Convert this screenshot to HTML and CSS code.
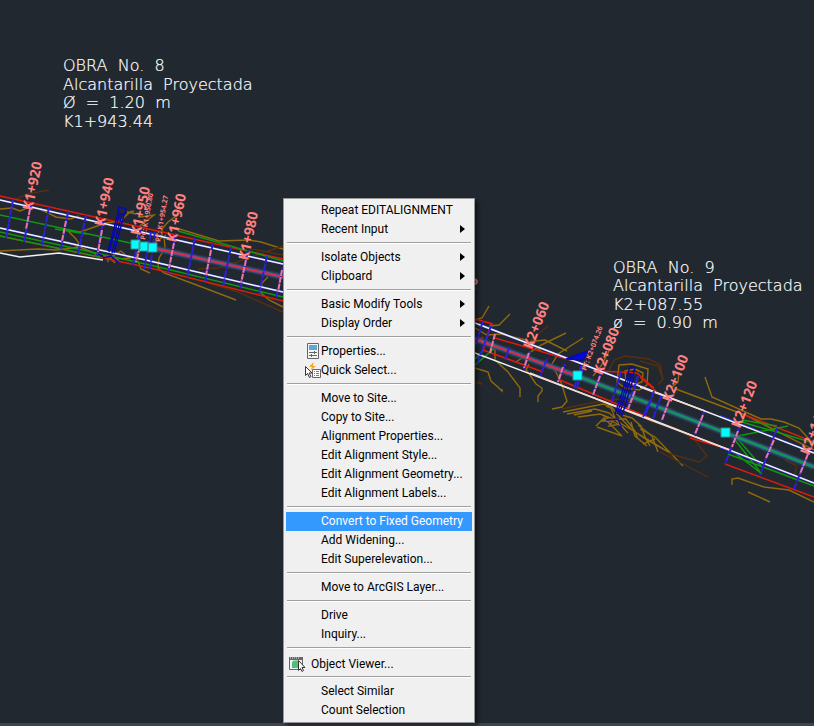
FILE: index.html
```html
<!DOCTYPE html>
<html lang="en">
<head>
<meta charset="utf-8">
<title>Alignment drawing</title>
<link rel="stylesheet" href="styles.css">
</head>
<body>
<main class="workspace">
<svg class="drawing" viewBox="0 0 814 726" preserveAspectRatio="xMinYMin slice" role="img" aria-label="Road alignment plan">
  <!-- contours -->
  <g class="contour">
    <path d="M0 209l12-1 8 3 7-3 6-1 11 4 12 6 14 2 9-3M66 230l14 2 26-9 14-2 10-9 4-1M68 231l8 8 3 5-2 2-10-4M0 251l18-1 20-1 19 1 23-3 16 7 15 3 10-6 9 8M130 212l6 2-9-2M138 261l3 8 9 4M121 259l13-2 6-8 10-3 16-11M176 228l43 13 30-1 12 2 22 7M164 237l1 11-6 10-1 10 6 5 30 11 42 16M140 217l14-2-14 11-3 12M268 277l-6 6-2 9 9 8 14 7M180 213l-12 9-6 7 0 7"/>
    <path d="M475 320l7-2 7-12M489 326l10-1 11-11M475 328l12 7 14-1 25 6 15 11M475 368l13 4 3 9 8 7 3 3 0-2M495 349l0 11 13 12 6 8 6 8 0 9M529 364l-3 6 4 5 6 9 6 4 0 3-4 5 0 6M553 367l5 9 4 9 3 10 2 6-5 6-10 2M566 333l-25 12-25 17M583 338l-25 16-9 15M524 342l21-2 22 11M619 365l13-1 16 5-1 16-8 5-14-2-8-6zM593 376l8-10 8-15"/>
    <path d="M625 371l10-2 8 4-1 9-9 3-7-4zM563 412l25-5 15-3 8 2 6 8 14 15 16 11 23 13M567 414l28-5 14 4 11 10 22 13 30 18M578 417l22-3 16 6 12 13M574 415l18-4M596 426l8-8 18 18-25-9M606 406l5 2 4 10M622 415l10 3 9 8 4 11 5 9M631 422l4 14 12 10M625 418l10 13 3 8M640 429l15 8 28 29M655 439l-12 5M705 377l7 20 49 22 10 0 13 3 15 6 9 10M676 389l69 26 69 35M732 485v-6l6-1 26 9 25 3 25 12M748 492l22 10"/>
    <path d="M603 415l5 4-7 2 12 0-4 5 12-2-4-5 9 0M608 419l15 8M638 425l14 11 6 16M679 372l-1 10-7 6"/>
    <path d="M103 255l5 3 0 4m2-4l5 5m-1-5l5 2"/>
  </g>
  <g class="contour contour-dark">
    <path d="M16 199l12-5 21-4M198 269l20-1 22-7 43-15M208 283l30 9 45 20M246 248l37 7M475 383l7 1-4-3M528 342l20-16M562 409l28-6 30-4 52 10M609 370l5-10 11-4 24 3 11 6 3 14-5 6M640 415l10 6 25 7 20 12 12 16-8 6-25-7-6-2M660 452l48 25M785 460l12 6-3 10M640 361l18 5 5 14"/>
  </g>
  <!-- side slopes -->
  <g class="red">
    <path d="M0 196L140 227 283 259M0 236l150 32 133 33"/>
    <path d="M475 319l18 5M483 337l-9 8M483 350l60 22M495 338l85 25M600 371l37 2 17 15M560 380l90 38M690 438l41 12M725 464l89 33M745 415l69 27M640 377l16 14M483 351l8-28"/>
  </g>
  <g class="green">
    <path d="M0 215L135 244M0 232l150 33 133 32M0 236l100 21M178 231l105 30M55 229l32 5M475 365l21-18M475 359l8-8M736 437l26 30M731 450l31 24M738 436l50-10M742 422l72 21M742 420l35 6M728 454l86 32M735 440l26 33"/>
  </g>
  <!-- alignment halo and centre line -->
  <path class="halo" d="M153 248L283 277M475 339L577 376 726 433 814 467"/>
  <path class="halo halo-core" d="M153 248L283 277M475 339L577 376 726 433 814 467"/>
  <path class="centre" d="M153 248L283 277M475 339L577 376"/>
  <path class="green-axis" d="M577 376L640 400 726 433 814 467"/>
  <!-- road edges -->
  <g class="edge-blue"><path d="M0 200L150 234 283 264M0 228l150 33 133 31M475 323l175 67M720 416l94 37M720 447l94 36"/></g>
  <g class="edge"><path d="M0 200L150 234 283 264M0 228l150 33 133 31M475 323l175 67 164 63M475 353l175 66 164 64M0 253l20 4 39-4 44 7"/></g>
  <g class="edge-warm"><path d="M640 387l65 24M640 416l90 34M530 373l110 43"/></g>
  <!-- section ticks -->
  <g class="tick">
    <path d="M13 200l-7 38M31 205l-7 37M49 207l-7 38M68 212l-7 37M86 215l-8 39M103 222l-6 33M141 227l-8 38M151 232l-7 37M155 231l-5 38M176 233l-8 40M195 238l-8 40M213 243l-8 39M231 247l-8 39M248 250l-8 40M267 256l-8 38M283 267l-7 31"/>
    <path d="M483 321l-8 25M491 326l-14 38M509 347l-4 13M530 351l-6 18M547 359l-7 17M565 364l-7 18M581 366l-7 23M584 366l-8 24M601 373l-8 22M621 372l-9 29M638 376l-10 31M649 403l-6 14M654 391l-9 25M661 396l-8 23M670 398l-9 24M704 412l-9 24M740 425l-15 39M777 428l-17 47M808 453l-14 36"/>
  </g>
  <g class="station">
    <path d="M30 209l-4 20M66 221l-4 20M102 230l-4 22M140 247l-4 15M174 243l-5 25M211 250l-5 25M246 260l-5 23M282 270l-4 22M495 334l-5 19M529 353l-5 15M563 367l-5 15M600 376l-7 19M635 391l-7 18M669 401l-7 19M703 415l-8 19M738 431l-6 16M774 440l-8 18M808 454l-8 20"/>
  </g>
  <!-- culverts -->
  <g class="culvert">
    <path d="M119 207l7 2-2 6-6-2zM120 213l-11 39M122 214l-10 39M124 215l-10 38M118 213l-10 38M103 258l8-2 8 7M103 256l-5-2M570 358l20-7M575 357l10-5M571 359l12-2"/>
    <path d="M630 367l5 1-2 7-5-2zM630 375l-13 39M632 375l-13 40M628 374l-13 40M634 376l-12 40M606 420l12-1 3 7 0 3"/>
    <path class="wedge" d="M566 359l22-8-5 9z"/>
  </g>
  <!-- station labels -->
  <g class="label">
    <text transform="translate(32 211) rotate(-78)">K1+920</text>
    <text transform="translate(104 227) rotate(-78)">K1+940</text>
    <text transform="translate(140 236) rotate(-78)">K1+950</text>
    <text transform="translate(176 243) rotate(-78)">K1+960</text>
    <text transform="translate(248 261) rotate(-78)">K1+980</text>
    <text transform="translate(461 325) rotate(-69)">K2+040</text>
    <text transform="translate(532 350) rotate(-69)">K2+060</text>
    <text transform="translate(602 376) rotate(-69)">K2+080</text>
    <text transform="translate(671 403) rotate(-69)">K2+100</text>
    <text transform="translate(740 429) rotate(-69)">K2+120</text>
    <text transform="translate(809 456) rotate(-69)">K2+140</text>
  </g>
  <g class="label label-small">
    <text transform="translate(145 240) rotate(-80)">PC: K1+950.80</text>
    <text transform="translate(160 242) rotate(-80)">PT: K1+954.27</text>
    <text transform="translate(586 371) rotate(-69)">PT: K2+074.26</text>
  </g>
  <g class="grip">
    <path d="M131 240h9v9h-9zM139 242h9v9h-9zM148 243h9v9h-9zM573 371h9v9h-9zM721 428h9v9h-9z"/>
  </g>
  <!-- structure notes -->
  <g class="note">
    <text x="63" y="71">OBRA  No.  8</text>
    <text x="63" y="90">Alcantarilla  Proyectada</text>
    <text x="63" y="108">Ø  =  1.20  m</text>
    <text x="63" y="127">K1+943.44</text>
    <text x="613" y="273">OBRA  No.  9</text>
    <text x="613" y="291">Alcantarilla  Proyectada</text>
    <text x="613" y="310">K2+087.55</text>
    <text x="613" y="328">ø  =  0.90  m</text>
  </g>
</svg>
<div class="menu" role="menu">
  <button class="item" role="menuitem">Repeat EDITALIGNMENT</button>
  <button class="item more" role="menuitem">Recent Input</button>
  <hr>
  <button class="item more" role="menuitem">Isolate Objects</button>
  <button class="item more" role="menuitem">Clipboard</button>
  <hr>
  <button class="item more" role="menuitem">Basic Modify Tools</button>
  <button class="item more" role="menuitem">Display Order</button>
  <hr>
  <button class="item with-icon" role="menuitem"><svg class="icon" viewBox="0 0 16 16" aria-hidden="true"><path d="M2.500 .5h11v15h-11z" fill="#f4f4f4" stroke="#666"/><path d="M4 2h8v5H4z" fill="#5ba7dc"/><path d="M4 9.500h8M4 12.500h8M9.500 8v3M6.500 11v3" stroke="#666" fill="none"/></svg>Properties...</button>
  <button class="item with-icon" role="menuitem"><svg class="icon" viewBox="0 0 16 16" aria-hidden="true"><path d="M8.500 0L4 5h3L5.500 8.500 11 4H8z" fill="#f5a81c"/><path d="M7.500 7.500h8v8h-8z" fill="#fff" stroke="#666"/><path d="M9 9.500h1M11 9.500h3M9 11.500h1M11 11.500h3M9 13.500h1M11 13.500h3" stroke="#2f8fda"/><path d="M.5 4.500v9l2-2 2 4 1.500-1-2-3.500h3z" fill="#fff" stroke="#333"/></svg>Quick Select...</button>
  <hr>
  <button class="item" role="menuitem">Move to Site...</button>
  <button class="item" role="menuitem">Copy to Site...</button>
  <button class="item" role="menuitem">Alignment Properties...</button>
  <button class="item" role="menuitem">Edit Alignment Style...</button>
  <button class="item" role="menuitem">Edit Alignment Geometry...</button>
  <button class="item" role="menuitem">Edit Alignment Labels...</button>
  <hr>
  <button class="item active" role="menuitem">Convert to Fixed Geometry</button>
  <button class="item" role="menuitem">Add Widening...</button>
  <button class="item" role="menuitem">Edit Superelevation...</button>
  <hr>
  <button class="item" role="menuitem">Move to ArcGIS Layer...</button>
  <hr>
  <button class="item" role="menuitem">Drive</button>
  <button class="item" role="menuitem">Inquiry...</button>
  <hr>
  <button class="item viewer" role="menuitem"><svg class="icon" viewBox="0 0 16 16" aria-hidden="true"><path d="M.5 1.500h13v12H.5z" fill="#f0f0f0" stroke="#666"/><path d="M0 1h14v3H0z" fill="#666"/><path d="M1 2h1M3 2h7" stroke="#ddd" stroke-dasharray="1 1"/><path d="M3 6l2-1.500h4V12H3z" fill="#51be7b"/><path d="M9.500 4.500v10l2-2 1.500 3 1.500-1-1.500-3H16z" fill="#fff" stroke="#333"/></svg>Object Viewer...</button>
  <hr>
  <button class="item" role="menuitem">Select Similar</button>
  <button class="item" role="menuitem">Count Selection</button>
</div>
</main>
<footer class="dock"></footer>
</body>
</html>
```
FILE: styles.css
```css
* { box-sizing: border-box; }
body {
  margin: 0;
  min-height: 100vh;
  display: flex;
  flex-direction: column;
  background: #212830;
  overflow: hidden;
}
.workspace { position: relative; flex: 1; }
.dock { height: 3px; background: #3b4453; }
.drawing {
  position: absolute;
  top: 0;
  left: 0;
  width: 100%;
  height: 100vh;
  fill: none;
  stroke-width: 1;
}
.contour { stroke: #90690c; stroke-width: 1.4; }
.contour-dark { stroke: #54300f; }
.red { stroke: #dc1c0c; stroke-width: 1.5; }
.green { stroke: #0f980f; stroke-width: 1.5; }
.halo { stroke: #28466a; stroke-width: 7; opacity: .6; }
.halo-core { stroke: #3a6698; stroke-width: 4; opacity: .8; }
.centre { stroke: #e02848; stroke-width: 2; }
.green-axis { stroke: #109850; stroke-width: 2; }
.edge-blue { stroke: #3030e0; stroke-width: 2; }
.edge { stroke: #f0f4fa; stroke-width: 1.5; }
.edge-warm { stroke: #f4d8d0; stroke-width: 1.5; }
.tick { stroke: #2c20dc; stroke-width: 2; stroke-dasharray: 7 1; }
.station { stroke: #e878a0; stroke-width: 2; stroke-dasharray: 6 1; }
.culvert { stroke: #0808b0; stroke-width: 1.4; }
.wedge { fill: #0808e0; }
.label {
  fill: #ff8080;
  font: bold 14px "Noto Sans", sans-serif;
}
.label-small { font-size: 7px; }
.grip { fill: #00ffff; stroke: #3c8c90; }
.note {
  fill: #fff;
  stroke: #fff;
  stroke-width: .2;
  font: 200 16px "DejaVu Sans Light", "DejaVu Sans", sans-serif;
}
.note text { white-space: pre; }

.menu {
  position: absolute;
  top: 198px;
  left: 283px;
  width: 192px;
  padding: 2px;
  display: flex;
  flex-direction: column;
  background: #f0f0f0;
  border: 1px solid #989898;
  box-shadow: 3px 3px 4px rgba(0, 0, 0, .5);
}
.menu hr {
  width: 184px;
  height: 2px;
  margin: 3px auto 4px;
  border: 0;
  border-top: 1px solid #a0a0a0;
  background: #fff;
}
.item {
  display: flex;
  align-items: center;
  height: 19px;
  padding: 0 7px 2px 35px;
  border: 0;
  background: none;
  color: #000;
  font: 12px/18px Roboto, sans-serif;
  text-align: left;
  white-space: nowrap;
}
.item.active { background: #3399ff; color: #fff; }
.more::after {
  content: "";
  margin-left: auto;
  border: 4px solid transparent;
  border-left: 5px solid #000;
  border-right: 0;
}
.icon { width: 16px; height: 16px; flex: none; }
.with-icon { padding-left: 19px; }
.viewer { height: 20px; padding: 1px 0 0 3px; gap: 6px; }
```
